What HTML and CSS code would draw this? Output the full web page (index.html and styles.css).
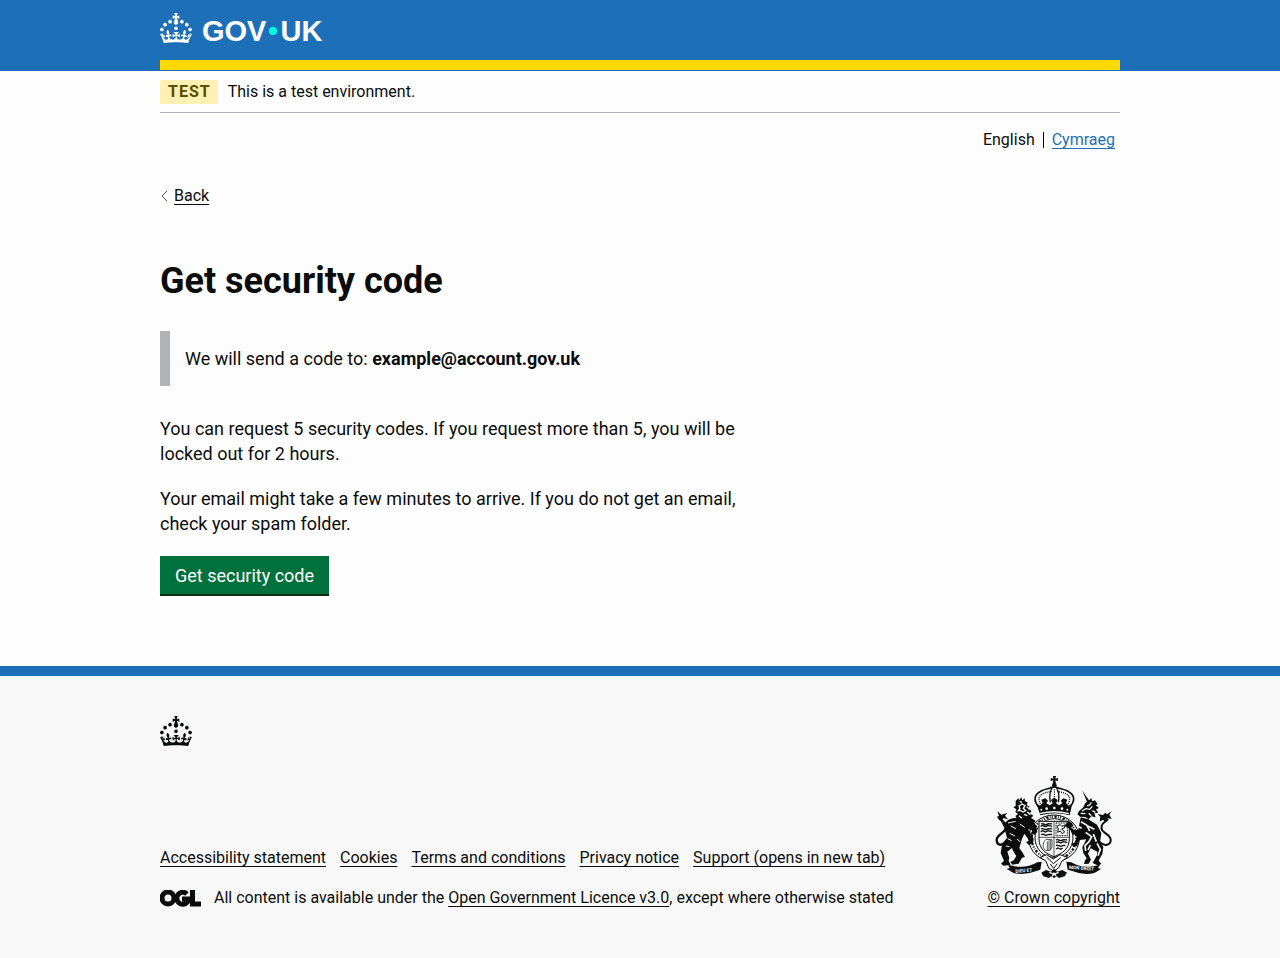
FILE: index.html
```html
<!DOCTYPE html>
<html lang="en">
<head>
<meta charset="utf-8">
<meta name="viewport" content="width=device-width, initial-scale=1">
<title>Get security code - GOV.UK</title>
<link rel="stylesheet" href="styles.css">
</head>
<body>
<svg class="sprite" aria-hidden="true">
  <symbol id="crown" viewBox="0 0 32 30">
    <path fill-rule="evenodd" d="M22.6 10.4c-1 .4-2-.1-2.4-1-.4-.9.1-2 1-2.4.9-.4 2 .1 2.4 1s-.1 2-1 2.4m-5.9 6.7c-.9.4-2-.1-2.4-1-.4-.9.1-2 1-2.4.9-.4 2 .1 2.4 1s-.1 2-1 2.4m10.8-3.7c-1 .4-2-.1-2.4-1-.4-.9.1-2 1-2.4.9-.4 2 .1 2.4 1s0 2-1 2.4m3.3 4.8c-1 .4-2-.1-2.4-1-.4-.9.1-2 1-2.4.9-.4 2 .1 2.4 1s-.1 2-1 2.4M17 4.7l2.3 1.2V2.5l-2.3.7-.2-.2.9-3h-3.4l.9 3-.2.2c-.1.1-2.3-.7-2.3-.7v3.4L15 4.7c.1.1.1.2.2.2l-1.3 4c-.1.2-.1.4-.1.6 0 1.1.8 2 1.9 2.2h.7c1-.2 1.9-1.1 1.9-2.1 0-.2 0-.4-.1-.6l-1.3-4c-.1-.2 0-.2.1-.3m-7.6 5.7c.9.4 2-.1 2.4-1 .4-.9-.1-2-1-2.4-.9-.4-2 .1-2.4 1s0 2 1 2.4m-5 3c.9.4 2-.1 2.4-1 .4-.9-.1-2-1-2.4-.9-.4-2 .1-2.4 1s.1 2 1 2.4m-3.2 4.8c.9.4 2-.1 2.4-1 .4-.9-.1-2-1-2.4-.9-.4-2 .1-2.4 1s0 2 1 2.4m14.8 11c4.4 0 8.6.3 12.3.8 1.1-4.5 2.4-7 3.7-8.8l-2.5-.9c.2 1.3.3 1.9 0 2.7-.4-.4-.8-1.1-1.1-2.3l-1.2 4c.7-.5 1.3-.8 2-.9-1.1 2.5-2.6 3.1-3.5 3-1.1-.2-1.7-1.2-1.5-2.1.3-1.2 1.5-1.5 2.1-.1 1.1-2.3-.8-3-2-2.3 1.9-1.9 2.1-3.5.6-5.6-2.1 1.6-2.1 3.2-1.2 5.5-1.2-1.4-3.2-.6-2.5 1.6.9-1.4 2.1-.5 1.9.8-.2 1.1-1.7 2.1-3.5 1.9-2.7-.2-2.9-2.1-2.9-3.6.7-.1 1.9.5 2.9 1.9l.4-4.3c-1.1 1.1-2.1 1.4-3.2 1.4.4-1.2 2.1-3 2.1-3h-5.4s1.7 1.9 2.1 3c-1.1 0-2.1-.2-3.2-1.4l.4 4.3c1-1.4 2.2-2 2.9-1.9-.1 1.5-.2 3.4-2.9 3.6-1.9.2-3.4-.8-3.5-1.9-.2-1.3 1-2.2 1.9-.8.7-2.3-1.2-3-2.5-1.6.9-2.2.9-3.9-1.2-5.5-1.5 2-1.3 3.7.6 5.6-1.2-.7-3.1 0-2 2.3.6-1.4 1.8-1.1 2.1.1.2.9-.3 1.9-1.5 2.1-.9.2-2.4-.5-3.5-3 .6 0 1.2.3 2 .9l-1.2-4c-.3 1.1-.7 1.9-1.1 2.3-.3-.8-.2-1.4 0-2.7l-2.9.9C1.3 23 2.6 25.5 3.7 30c3.7-.5 7.9-.8 12.3-.8"/>
  </symbol>
</svg>

<header class="header">
  <div class="container">
    <a class="brand" href="#" aria-label="GOV.UK">
      <svg class="crown" aria-hidden="true"><use href="#crown"/></svg>
      <span class="wordmark"><span>GOV</span><span class="dot"></span><span>UK</span></span>
    </a>
    <div class="header-bar"></div>
  </div>
</header>

<div class="container page">
  <div class="phase">
    <strong class="tag">TEST</strong>
    <span>This is a test environment.</span>
  </div>
  <nav class="languages" aria-label="Language">
    <span class="current">English</span>
    <a href="#" lang="cy">Cymraeg</a>
  </nav>
  <a class="back" href="#">
    <svg class="chevron" viewBox="0 0 8 12" aria-hidden="true"><path d="M7 1 2 6l5 5"/></svg>
    <span>Back</span>
  </a>
  <main class="main">
    <h1>Get security code</h1>
    <div class="inset">We will send a code to: <strong>example@account.gov.uk</strong></div>
    <p>You can request 5 security codes. If you request more than 5, you will be locked out for 2 hours.</p>
    <p>Your email might take a few minutes to arrive. If you do not get an email, check your spam folder.</p>
    <button class="button" type="button">Get security code</button>
  </main>
</div>

<footer class="footer">
  <div class="container">
    <svg class="crown" aria-hidden="true"><use href="#crown"/></svg>
    <div class="meta">
      <div class="meta-main">
        <ul class="links">
          <li><a href="#">Accessibility statement</a></li>
          <li><a href="#">Cookies</a></li>
          <li><a href="#">Terms and conditions</a></li>
          <li><a href="#">Privacy notice</a></li>
          <li><a href="#">Support (opens in new tab)</a></li>
        </ul>
        <div class="licence">
          <svg class="ogl" viewBox="0 0 41 17" aria-hidden="true">
            <circle cx="8" cy="8" r="6"/>
            <path d="M27 4A6 6 0 1 0 27.500 12V9H22M32.500 0v14H41"/>
          </svg>
          <span>All content is available under the <a href="#">Open Government Licence v3.0</a>, except where otherwise stated</span>
        </div>
      </div>
      <a class="copyright" href="#">
        <svg class="crest" viewBox="45 33 354 306" aria-hidden="true">
          <!-- imperial crown -->
          <path d="M219 33h9l-2 8 8-2v9l-8-2 2 10h-10l2-10-8 2v-9l8 2z"/>
          <circle cx="223" cy="61" r="7"/>
          <g class="line">
            <path d="M180 130C158 108 161 88 185 77c13-6 27-7 38-12 11 5 25 6 38 12 24 11 27 31 5 53" stroke-width="5"/>
            <path d="M185 122c-12-17-10-29 4-36 9-4 19-5 26-7M261 122c12-17 10-29-4-36-9-4-19-5-26-7" stroke-width="4" stroke-dasharray="3 3"/>
            <path d="M217 66c-10 18-9 32-6 46M229 66c10 18 9 32 6 46" stroke-width="4"/>
            <path d="M223 72v32" stroke-width="3" stroke-dasharray="4 3"/>
          </g>
          <path d="M169 115l11 7 8-8-4-10 12-4 8 7-5 8 10 6 9-6-5-10 10-7 10 7-5 10 9 6 10-6-5-8 8-7 12 4-4 10 8 8 11-7-8 36q-43-12-88 0z"/>
          <g class="paper"><circle cx="184" cy="134" r="3"/><circle cx="200" cy="131" r="4"/><circle cx="223" cy="129" r="4"/><circle cx="246" cy="131" r="4"/><circle cx="262" cy="134" r="3"/><path d="M178 144q45-12 90 0l-2 4q-43-11-86 0z"/></g>
          <!-- garter and shield -->
          <ellipse class="white line" cx="222" cy="220" rx="76" ry="70" stroke-width="3"/>
          <ellipse class="line" cx="222" cy="219" rx="67" ry="64" stroke-width="7" stroke-dasharray="3 5 7 4 2 4"/>
          <ellipse class="white line" cx="222" cy="219" rx="57" ry="58" stroke-width="3"/>
          <path class="white line" d="M177 169h91v52c0 31-20 44-46 54-26-10-45-23-45-54z" stroke-width="3"/>
          <path class="line" d="M222 169v105M177 217h91" stroke-width="2"/>
          <g class="line" stroke-width="4">
            <path d="M183 177c8-5 10 5 17 1s10 0 16-2M182 184l6-3 8 4 8-4 12 3M183 192c8-5 10 5 17 1s10 0 16-2M182 200l6-3 8 4 8-4 12 3M184 209c8-5 10 5 17 1s10 0 15-2"/>
            <path d="M228 225c8-5 10 5 17 1s10 0 16-2M228 233l6-3 8 4 8-4 12 3M228 242c8-5 10 5 17 1s8 0 11-2M228 252l6-3 8 4 6-4"/>
          </g>
          <path class="line" d="M228 174h34v38h-34z" stroke-width="3" stroke-dasharray="3 2"/>
          <path class="line" d="M237 180c8-4 5 7 12 3l7-4-3 10-8 3 9 9-7 5-6-8-8 4 2-10-4-8z" stroke-width="3"/>
          <path class="line" d="M198 223c-9 8-12 22-4 31 8 6 20 2 22-8v-22zM202 229v27M207 226v31M212 225v28" stroke-width="2"/>
          <!-- lion -->
          <path d="M107 108l8-9 2 7 7-9 3 9 7-6 1 9 8 3-3 8 9 5-5 7 11 6-6 7 11 7-7 7 14 8-5 7 10 12-14 5-16-12-9 7-12-5-6-11 4-9-9-1-4-7 8-6-8-6 3-8-9-6 7-4z"/>
          <path class="lite" d="M117 123l9-6 9 5-5 8 7 7-8 4-8-5-6 1 5-6zM119 109l7 3M140 125l7 6M132 148l10 4M142 140l9 9M117 152l9 8" stroke-width="4"/>
          <path d="M116 160c-25-5-45 8-43 30l8 28-15 21-4 25 10 23-9 9 8 6 21-3-6-12 2-9-6-18 14-11 4 11 9 13-8 13-10 5 6 8 19-3 10-18 9-2-7-13-10-14 7-25 8-18 15 21-10 4 8 9 13-7 2-12-16-29 12 4-4 11 12 2 7-9-3-14-21-14z"/>
          <path class="line" d="M79 228c-16 18-29 12-29-3 0-20 33-21 28-44-3-12-16-13-22-24" stroke-width="7"/>
          <path d="M52 139l12 10 18-5-7 8 9 11-14-4-5 16-4-13-11-6 7-4zM64 171l15 8-7 8z"/>
          <path class="lite" d="M84 174l23-5M92 183l16 8M89 205l16 8M83 221l12 6M78 243l10 2M119 177l15 10M111 222l9 8M92 264l11-3" stroke-width="3"/>
          <!-- unicorn -->
          <path d="M307 77l23 33-7 5zM316 114l11-8 8-6 1 9 9-3 8 12-6 3 10 8-9 4 7 10-12 2 4 12-13-3-8 9-10-7-16-1-8-8 5-9 12-10z"/>
          <path class="lite" d="M306 138l12-7 11 2 8-9M321 123l10-4M302 145l14 1M334 112l-4 6M337 137l9 5M326 145l8 7" stroke-width="4"/>
          <path d="M302 157l23 6 26 16 13 25-4 28 10 14-3 20-11 21 8 9-9 6-17-8 13-24 1-10-20-10-8 16 9 18-7 12-14 1 3-11 5-6-10-16-3-17 12-24-20 2-8 18-12 3-4-10 11-4 4-19-12-5-9-17-15-7 9-14 13 3 4 10-7 5 10 7 12-1z"/>
          <path class="lite" d="M303 170l17 10 9 18M323 183l20 10M317 202l18 13-8 15-12 12 2 16M340 207l9 23M351 235l10 18-7 19M296 185l9 5M331 240l-7 15" stroke-width="5"/>
          <path class="line" d="M358 230c16 17 35 10 34-6-1-19-33-19-27-42 3-11 13-11 19-20" stroke-width="6"/>
          <path d="M395 139l-7 10 7 13-12-2-5 13-9-9-10 6 2-14-8-9 16 3 7-7 5 5z"/>
          <!-- motto and compartment -->
          <path d="M84 299l20 5q36 6 68-12l13-2-4 24-12 4q-36 14-68 6l-14-8-7-4 9-3zM360 300l-20 4q-36 6-66-12l-15-2 4 24 14 4q34 14 66 6l14-8 6-4-9-3z"/>
          <g class="motto"><text x="106" y="321" transform="rotate(-5 139 315)">DIEU ET</text><text x="266" y="314" transform="rotate(5 300 315)">MON DROIT</text></g>
          <path class="white line" d="M181 277l19-8 20 13 20-13 22 8-17 12-8 18-15 12-16-10-8-20z" stroke-width="3"/>
          <path class="line" d="M200 276l20 20 22-18M211 297l10 13 11-14" stroke-width="3"/>
          <path d="M184 323l14-8 15 5 9-9 10 9 15-5 14 8-7 11-17 5-6-5-9 5-9-5-6 5-17-5z"/>
          <path class="lite" d="M208 322l14 6 14-6M217 334l5-9 6 8" stroke-width="4"/>
        </svg>
        <span>© Crown copyright</span>
      </a>
    </div>
  </div>
</footer>
</body>
</html>
```

FILE: styles.css
```css
* { box-sizing: border-box; }

body {
  margin: 0;
  min-height: 100vh;
  display: flex;
  flex-direction: column;
  background: #fdfdfd;
  color: #0b0c0c;
  font-family: Roboto, "Liberation Sans", sans-serif;
  font-size: 16px;
  line-height: 20px;
}

a {
  color: inherit;
  text-decoration-thickness: 1px;
  text-underline-offset: 3px;
  text-decoration-skip-ink: none;
}

.sprite { display: none; }

.container {
  width: calc(100% - 60px);
  max-width: 960px;
  margin: 0 auto;
}

.header { background: #1d70b8; padding-bottom: 1px; }

.brand {
  display: flex;
  align-items: center;
  gap: 10px;
  height: 60px;
  padding-bottom: 4px;
  color: #fff;
  text-decoration: none;
}

.crown { display: block; width: 32px; height: 30px; fill: currentColor; }

.wordmark {
  display: flex;
  align-items: center;
  gap: 3px;
  padding-top: 6px;
  font-family: "Liberation Sans", sans-serif;
  font-size: 29px;
  line-height: 30px;
  font-weight: 700;
}

.dot { width: 8px; height: 8px; border-radius: 50%; background: #00ffe0; }

.header-bar { height: 10px; background: #ffd900; }

.phase {
  display: flex;
  align-items: center;
  gap: 10px;
  padding: 9px 0 8px;
  border-bottom: 1px solid #b1b4b6;
}

.tag {
  padding: 2px 7px 2px 8px;
  background: #fff1b3;
  color: #594d00;
  letter-spacing: 1px;
}

.languages {
  display: flex;
  justify-content: flex-end;
  align-items: center;
  padding: 17px 5px 0 0;
}

.current {
  margin-right: 8px;
  padding-right: 8px;
  border-right: 1px solid #0b0c0c;
  line-height: 16px;
}

.languages a { color: #1d70b8; }

.back {
  display: inline-flex;
  align-items: center;
  gap: 6px;
  margin-top: 36px;
}

.back span { text-decoration: underline 1px; text-underline-offset: 3px; }
.back { text-decoration: none; }

.chevron { width: 8px; height: 12px; fill: none; stroke: #505a5f; }

.main {
  max-width: 630px;
  padding: 54px 30px 70px 0;
  font-size: 18px;
  line-height: 25px;
}

h1 { margin: 0 0 30px; font-size: 36px; line-height: 40px; }

.inset {
  margin-bottom: 30px;
  padding: 15px;
  border-left: 10px solid #b1b4b6;
}

p { margin: 0 0 20px; }

.button {
  display: block;
  padding: 10px 15px 9px;
  border: 0;
  border-bottom: 2px solid #002d18;
  background: #00703c;
  color: #fff;
  font: inherit;
  line-height: 19px;
}

.footer {
  flex: 1;
  padding: 40px 0;
  border-top: 10px solid #1d70b8;
  background: #f8f8f8;
}

.meta {
  display: flex;
  align-items: flex-end;
  justify-content: space-between;
  gap: 30px;
  margin-top: 30px;
}

.links {
  display: flex;
  flex-wrap: wrap;
  gap: 10px 14px;
  margin: 0 0 20px;
  padding: 0;
  list-style: none;
}

.licence { display: flex; align-items: center; gap: 13px; }

.ogl { width: 41px; height: 17px; fill: none; stroke: #0b0c0c; stroke-width: 5; }

.copyright {
  display: flex;
  flex-direction: column;
  align-items: center;
  gap: 10px;
  white-space: nowrap;
}

.crest { width: 118px; height: 102px; fill: #0b0c0c; }
.crest .line { fill: none; stroke: #0b0c0c; }
.crest .white { fill: #f8f8f8; }
.crest .paper { fill: #f8f8f8; }
.crest .lite { fill: none; stroke: #f8f8f8; }
.motto { fill: #f8f8f8; font-size: 14px; font-weight: 700; }
```
